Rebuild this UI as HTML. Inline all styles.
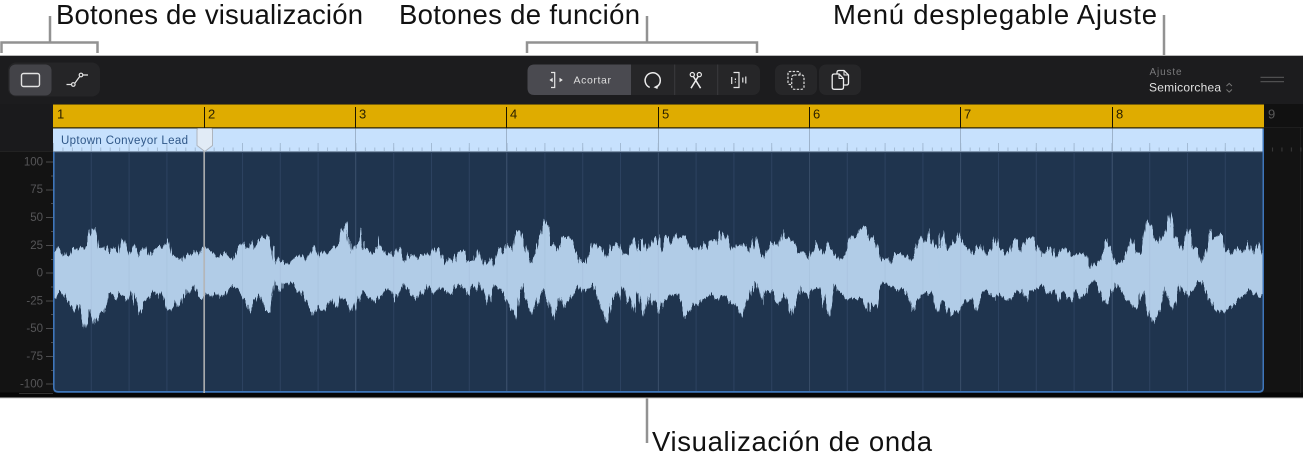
<!DOCTYPE html>
<html lang="es"><head><meta charset="utf-8"><title>Visualización de onda</title>
<style>html,body{margin:0;padding:0;background:#fff;width:1303px;height:468px;overflow:hidden}svg{display:block}text{font-family:"Liberation Sans",sans-serif}</style>
</head><body>
<svg width="1303" height="468" viewBox="0 0 1303 468" xmlns="http://www.w3.org/2000/svg">
<defs>
<pattern id="t16" patternUnits="userSpaceOnUse" x="53" y="0" width="9.45" height="468"><rect x="0" y="147.5" width="1" height="4" fill="#a3bbd5"/></pattern>
<pattern id="t4" patternUnits="userSpaceOnUse" x="53" y="0" width="37.8" height="468"><rect x="0" y="143" width="1" height="9" fill="#a3bbd5"/></pattern>
<pattern id="g4" patternUnits="userSpaceOnUse" x="53" y="0" width="37.8" height="468"><rect x="0" y="0" width="1" height="468" fill="#2c4260"/></pattern>
<pattern id="d16" patternUnits="userSpaceOnUse" x="1264" y="0" width="9.45" height="468"><rect x="8" y="147.5" width="1" height="4" fill="#3a3a3a"/></pattern>
<clipPath id="reg"><path d="M53 128.500h1211V388q0 5-5 5H58q-5 0-5-5z"/></clipPath>
<filter id="jag" filterUnits="userSpaceOnUse" x="40" y="152" width="1240" height="240" color-interpolation-filters="sRGB">
<feTurbulence type="fractalNoise" baseFrequency="0.45 0.015" numOctaves="2" seed="7" result="n"/>
<feDisplacementMap in="SourceGraphic" in2="n" scale="9" xChannelSelector="A" yChannelSelector="G"/>
</filter>
</defs>
<rect width="1303" height="468" fill="#fff"/>
<!-- annotations -->
<text x="56" y="24" font-size="27.5" fill="#111" textLength="307">Botones de visualización</text>
<text x="399" y="24" font-size="27.5" fill="#111" textLength="241">Botones de función</text>
<text x="833" y="24" font-size="27.5" fill="#111" textLength="324">Menú desplegable Ajuste</text>
<text x="652" y="451" font-size="27.5" fill="#111" textLength="280">Visualización de onda</text>
<g fill="none" stroke="#929292" stroke-width="2.5">
<path d="M50 16V42.5M1.5 53V42.5H97.5V53"/>
<path d="M647 16V42.5M527 53V42.5H757V53"/>
<path d="M1164 15V55"/>
<path d="M647 398V443"/>
</g>
<!-- app body -->
<rect x="0" y="55" width="1303" height="1" fill="#b9b9b9"/>
<rect x="0" y="56" width="1303" height="48.5" fill="#1c1c1e"/>
<rect x="0" y="104" width="1303" height="293.5" fill="#131313"/>
<rect x="0" y="392.5" width="1303" height="5" fill="#060606"/>
<rect x="0" y="397.5" width="1303" height="1" fill="#c9c9c9"/>
<rect x="0" y="104" width="53" height="47" fill="#1a1a1c"/>
<rect x="1264" y="104" width="39" height="24" fill="#111"/>
<rect x="19" y="393" width="34" height="1" fill="#333"/>
<rect x="1300" y="128" width="1" height="265" fill="#1f1f1f"/>
<rect x="0" y="151" width="53" height="1" fill="#222"/>
<rect x="1264" y="127" width="39" height="1" fill="#1e1e1e"/>
<rect x="1264" y="128" width="39" height="24" fill="url(#d16)"/>
<!-- toolbar left -->
<rect x="8" y="62.5" width="92" height="34" rx="8" fill="#252527"/>
<rect x="9.5" y="64.5" width="42" height="31" rx="6" fill="#434348"/>
<rect x="21.5" y="73.5" width="18" height="13" rx="2" fill="none" stroke="#e3e3e3" stroke-width="1.4"/>
<g fill="none" stroke="#e3e3e3" stroke-width="1.2">
<path d="M66.5 84.5H71.5M75 83L79.7 76.5M83 75H88"/>
<circle cx="73.3" cy="84.5" r="1.8"/><circle cx="81" cy="75" r="1.8"/>
</g>
<!-- function group -->
<rect x="527.5" y="64.5" width="232.5" height="30.5" rx="7" fill="#262628"/>
<path d="M534.5 64.5H631V95H534.5q-7 0-7-7V71.5q0-7 7-7z" fill="#4a4a50"/>
<rect x="674.2" y="64.5" width="1" height="30.5" fill="#3b3b3e"/>
<rect x="717.2" y="64.5" width="1" height="30.5" fill="#3b3b3e"/>
<rect x="775" y="64.5" width="42" height="30.5" rx="7" fill="#262628"/>
<rect x="819" y="64.5" width="42" height="30.5" rx="7" fill="#262628"/>
<path d="M551 72.500h3.700v15H551" fill="none" stroke="#e6e6e6" stroke-width="1.2"/>
<path d="M552.700 77.700v4.600L549.400 80zM559.500 77.700v4.600l3.300-2.300z" fill="#e6e6e6"/>
<text x="573.5" y="83.5" font-size="10.5" fill="#dedede" textLength="37.5">Acortar</text>
<!-- loop -->
<path d="M657.500 86.300A7.600 7.600 0 1 0 649.700 87.400" fill="none" stroke="#ececec" stroke-width="1.500"/>
<path d="M658.400 84.600l-1 4.400-3.900-1.700z" fill="#ececec"/>
<!-- scissors -->
<g fill="none" stroke="#ececec" stroke-width="1.2">
<circle cx="692.3" cy="74.6" r="2.1"/><circle cx="699.3" cy="74.6" r="2.1"/>
<path d="M693.400 76.500L700.600 88.200M698.200 76.500L691 88.200" stroke-width="1.500"/>
</g>
<!-- split -->
<g fill="none" stroke="#e6e6e6" stroke-width="1.2">
<path d="M733.500 72.500h5.500v15h-5.500"/>
<path d="M731.700 77v7M735.400 78.500v1.500M735.400 81.500v1M742.800 77.500v5M745.800 76.500v7"/>
</g>
<!-- copy -->
<g fill="none" stroke="#dcdcdc" stroke-width="1.2">
<path d="M791 84.500h-1q-2 0-2-2V73.500q0-2 2-2h8q2 0 2 2v1.500" stroke-dasharray="2.4 1.4"/>
<rect x="791.7" y="75" width="12.3" height="14.3" rx="2.5" stroke-dasharray="2.4 1.4"/>
</g>
<!-- paste -->
<g fill="none" stroke="#ececec" stroke-width="1.3" stroke-linejoin="round">
<path d="M837 74v-1.500q0-2 2-2h5l4.500 4.500v8q0 2-2 2h-3"/>
<path d="M834.200 74h4.800l4.500 4.500v8.800q0 2-2 2h-7.300q-2 0-2-2V76q0-2 2-2z"/>
<path d="M839 74v4.500h4.500M844 70.500V75h4.500" stroke-width="1"/>
</g>
<!-- snap -->
<text x="1149.5" y="75" font-size="10" fill="#7a7a7c" textLength="32">Ajuste</text>
<text x="1149" y="91.5" font-size="12" fill="#e0e0e0" textLength="72">Semicorchea</text>
<path d="M1226.500 86l2.700-2.600 2.700 2.600M1226.500 89.500l2.700 2.600 2.700-2.600" fill="none" stroke="#777" stroke-width="1"/>
<rect x="1260.5" y="76.8" width="23.5" height="1" fill="#5c5c5e"/>
<rect x="1260.5" y="81.2" width="23.5" height="1" fill="#5c5c5e"/>
<!-- ruler -->
<rect x="53" y="104.5" width="1211" height="23" fill="#dfac00"/>
<rect x="53" y="127" width="1211" height="1.2" fill="#5a4500"/>
<g fill="#1a1400">
<rect x="204" y="107" width="1" height="21"/><rect x="355" y="107" width="1" height="21"/><rect x="506" y="107" width="1" height="21"/><rect x="658" y="107" width="1" height="21"/><rect x="809" y="107" width="1" height="21"/><rect x="960" y="107" width="1" height="21"/><rect x="1112" y="107" width="1" height="21"/>
</g>
<g font-size="13" fill="#2a2000">
<text x="57" y="118.5">1</text><text x="208" y="118.5">2</text><text x="359" y="118.5">3</text><text x="510" y="118.5">4</text><text x="662" y="118.5">5</text><text x="813" y="118.5">6</text><text x="964" y="118.5">7</text><text x="1116" y="118.5">8</text>
</g>
<text x="1268" y="118.5" font-size="13" fill="#5a5a5a">9</text>
<!-- y axis -->
<g font-size="11.5" fill="#565658" text-anchor="end">
<text x="43" y="165.5">100</text><text x="43" y="193">75</text><text x="43" y="221">50</text><text x="43" y="249">25</text><text x="43" y="276.5">0</text><text x="43" y="304.5">-25</text><text x="43" y="332">-50</text><text x="43" y="360">-75</text><text x="43" y="387.5">-100</text>
</g>
<g fill="#4c4c4e">
<rect x="46" y="161.5" width="7" height="1"/><rect x="46" y="189.5" width="7" height="1"/><rect x="46" y="217" width="7" height="1"/><rect x="46" y="245" width="7" height="1"/><rect x="46" y="272.5" width="7" height="1"/><rect x="46" y="300.5" width="7" height="1"/><rect x="46" y="328" width="7" height="1"/><rect x="46" y="356" width="7" height="1"/><rect x="46" y="383.5" width="7" height="1"/>
<rect x="51" y="175.5" width="2" height="1"/><rect x="51" y="203" width="2" height="1"/><rect x="51" y="231" width="2" height="1"/><rect x="51" y="259" width="2" height="1"/><rect x="51" y="286.5" width="2" height="1"/><rect x="51" y="314" width="2" height="1"/><rect x="51" y="342" width="2" height="1"/><rect x="51" y="370" width="2" height="1"/>
</g>
<!-- region -->
<g clip-path="url(#reg)">
<rect x="53" y="128" width="1211" height="24" fill="#c7e1fd"/>
<rect x="53" y="128" width="1211" height="24" fill="url(#t16)"/>
<rect x="53" y="128" width="1211" height="24" fill="url(#t4)"/>
<g fill="#9db3cb"><rect x="355" y="128" width="1" height="24"/><rect x="506" y="128" width="1" height="24"/><rect x="658" y="128" width="1" height="24"/><rect x="809" y="128" width="1" height="24"/><rect x="960" y="128" width="1" height="24"/><rect x="1112" y="128" width="1" height="24"/></g>
<rect x="53" y="151" width="1211" height="242" fill="#1f344e"/>
<rect x="53" y="151" width="1211" height="1.2" fill="#7f95ae"/>
<rect x="53" y="152" width="1211" height="240" fill="url(#g4)"/>
<g fill="#364b66"><rect x="355" y="152" width="1" height="240"/><rect x="506" y="152" width="1" height="240"/><rect x="658" y="152" width="1" height="240"/><rect x="809" y="152" width="1" height="240"/><rect x="960" y="152" width="1" height="240"/><rect x="1112" y="152" width="1" height="240"/></g>
<!-- waveform traced per segment -->
<g fill="#b1cce7" filter="url(#jag)">
<polygon transform="translate(50,205) scale(.33333)" points="-30,145 10,145 25,128 32,128 43,155 50,145 58,153 65,128 80,130 95,130 110,118 118,95 128,68 135,68 143,100 147,128 165,122 180,145 190,128 205,148 213,105 222,105 232,153 248,118 256,118 268,150 280,132 290,130 298,152 320,128 340,125 352,100 358,105 365,148 380,155 396,168 408,145 425,150 440,135 452,150 462,130 480,135 505,158 520,140 550,168 565,125 575,118 580,130 598,130 602,110 615,130 632,100 650,92 660,105 668,140 675,183 685,152 692,170 716,178 730,162 750,148 770,165 785,125 798,122 806,160 820,135 832,150 860,120 875,90 885,65 892,52 895,120 901,95 901,318 890,275 880,285 873,255 860,312 845,282 820,315 805,305 790,335 755,260 745,270 722,232 695,235 688,262 672,225 660,318 650,320 640,295 628,265 612,285 600,325 575,258 545,240 515,280 495,255 485,275 470,262 460,282 445,275 430,238 412,285 405,250 388,308 380,282 370,310 355,318 342,265 335,255 322,280 312,255 290,290 278,290 268,330 245,255 235,288 212,265 200,282 190,275 175,260 160,325 150,325 132,360 118,310 105,370 85,297 72,318 50,285 32,262 25,260 10,280 -30,280"/>
<polygon transform="translate(340,205) scale(.33333)" points="-1,95 8,70 20,52 24,130 27,95 35,150 45,120 58,108 62,65 68,65 72,130 100,145 112,118 118,85 122,118 135,150 150,140 158,155 175,125 185,150 195,170 215,140 230,160 245,150 270,148 288,128 305,150 315,178 328,155 340,175 352,145 372,135 382,168 405,168 415,130 425,170 440,180 450,155 460,187 478,125 490,150 498,118 515,135 525,70 545,80 555,120 572,175 590,130 615,45 628,70 635,120 645,122 652,140 668,97 695,102 722,170 738,175 760,112 770,128 785,122 798,160 815,120 835,115 845,145 865,150 880,100 888,105 895,140 901,138 901,290 895,255 882,325 870,270 860,295 850,240 840,285 830,255 815,285 800,350 760,232 730,260 715,238 672,305 662,275 645,350 625,285 605,255 580,335 545,238 525,340 495,275 465,238 440,305 420,230 410,262 395,240 385,270 365,238 350,240 330,265 295,245 280,270 258,235 235,282 215,272 192,232 165,295 150,255 125,262 108,297 80,265 62,262 55,290 50,270 40,325 20,290 5,280 -1,255"/>
<polygon transform="translate(640,205) scale(.33333)" points="-1,105 15,108 22,135 42,90 50,92 65,140 75,100 88,85 95,115 108,85 112,105 135,92 150,135 170,125 183,135 190,108 205,128 215,105 232,115 245,78 262,100 275,140 285,118 300,125 308,105 330,148 348,92 360,145 370,160 395,112 415,125 430,72 438,95 465,120 472,145 495,140 505,165 528,108 550,150 562,115 590,160 598,165 615,150 635,95 650,95 660,70 678,65 690,100 700,92 722,170 745,155 752,175 765,145 800,155 815,165 840,100 850,100 858,110 868,65 885,130 901,125 901,290 895,325 880,270 855,262 830,292 818,320 810,285 785,245 770,265 760,245 722,235 712,305 690,295 682,325 660,280 620,282 605,270 585,232 568,335 540,250 520,245 505,280 480,245 458,330 435,258 412,300 395,258 375,258 365,300 355,240 340,232 307,345 290,300 250,270 230,285 212,262 180,295 160,300 135,338 115,265 100,270 70,285 55,325 30,265 12,335 -1,288"/>
<polygon transform="translate(940,205) scale(.33333)" points="-1,105 8,78 18,135 30,135 55,82 70,120 95,150 125,110 135,150 155,135 167,95 175,125 205,150 218,105 232,100 240,140 262,100 282,98 305,155 330,125 345,160 365,130 380,130 395,155 425,142 440,150 452,188 480,165 498,105 518,150 530,180 550,165 575,95 590,145 605,145 622,40 635,70 655,118 675,75 690,20 700,90 725,135 745,75 758,135 775,125 785,175 795,150 810,75 825,100 845,80 855,135 878,150 895,118 910,145 925,105 940,148 958,112 968,150 1000,150 1000,275 968,275 965,280 925,255 890,290 845,325 820,310 785,235 770,230 745,275 720,240 700,318 675,245 660,315 638,355 605,255 590,315 550,265 525,230 500,295 470,228 445,235 440,265 420,280 405,250 395,295 370,258 360,290 345,255 320,270 305,240 270,260 260,298 245,250 200,290 175,268 165,290 140,255 125,265 105,320 95,285 70,292 55,320 30,335 15,290 -1,285"/>
</g>
<!-- faint grid over wave -->
<rect x="53" y="152" width="1211" height="240" fill="url(#g4)" opacity=".05"/>
<path d="M53.800 152V387.500q0 4.300 4.300 4.300H1259q4.300 0 4.300-4.300V128" fill="none" stroke="#3f76ba" stroke-width="1.600"/>
</g>
<text x="61" y="144" font-size="11.5" fill="#2f5788" textLength="127">Uptown Conveyor Lead</text>
<!-- playhead -->
<rect x="203.4" y="150" width="1.5" height="243" fill="#b5b5b5"/>
<path d="M197 130q0-1.500 1.500-1.500h12.500q1.500 0 1.500 1.500v15.500l-7.700 6-7.800-6z" fill="#e1ebf6" stroke="#aeb5be" stroke-width="1"/>
</svg>
</body></html>
